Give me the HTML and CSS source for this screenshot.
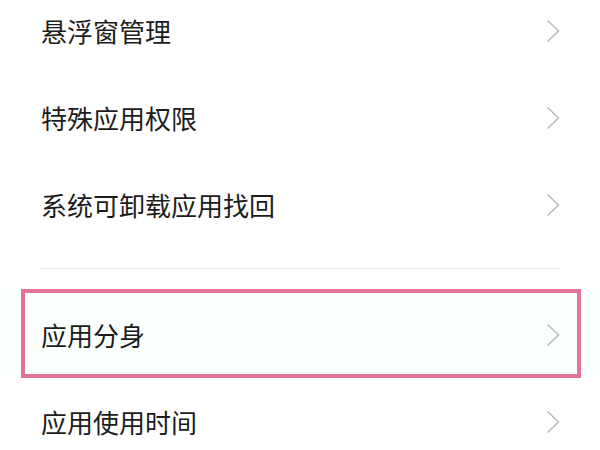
FILE: index.html
```html
<!DOCTYPE html>
<html lang="zh-CN">
<head>
    <meta charset="UTF-8">
    <meta name="viewport" content="width=device-width, initial-scale=1.0">
    <title>应用管理</title>
    <link rel="stylesheet" href="styles.css">
</head>

<body>
    <div class="settings">
        <ul class="group">
            <li class="item">
                <span class="label">悬浮窗管理</span>
                <svg class="arrow" viewBox="0 0 14 24"><path d="M1.5 1.5 L12.5 12 L1.5 22.5"/></svg>
            </li>
            <li class="item">
                <span class="label">特殊应用权限</span>
                <svg class="arrow" viewBox="0 0 14 24"><path d="M1.5 1.5 L12.5 12 L1.5 22.5"/></svg>
            </li>
            <li class="item">
                <span class="label">系统可卸载应用找回</span>
                <svg class="arrow" viewBox="0 0 14 24"><path d="M1.5 1.5 L12.5 12 L1.5 22.5"/></svg>
            </li>
        </ul>

        <div class="divider"></div>

        <ul class="group">
            <li class="item highlight">
                <span class="label">应用分身</span>
                <svg class="arrow" viewBox="0 0 14 24"><path d="M1.5 1.5 L12.5 12 L1.5 22.5"/></svg>
            </li>
            <li class="item">
                <span class="label">应用使用时间</span>
                <svg class="arrow" viewBox="0 0 14 24"><path d="M1.5 1.5 L12.5 12 L1.5 22.5"/></svg>
            </li>
        </ul>
    </div>
</body>
</html>
```

FILE: styles.css
```css
body {
    font-family: "Noto Sans CJK SC", "Noto Sans", sans-serif;
    background-color: #fff;
    margin: 0;
    padding: 0;
    overflow: hidden;
}

.settings {
    margin-top: -13px;
}

.group {
    list-style: none;
    margin: 0;
    padding: 0;
}

.item {
    display: flex;
    align-items: center;
    justify-content: space-between;
    height: 87px;
    padding: 0 40px 0 41px;
    position: relative;
}

.label {
    font-size: 26px;
    color: #1c1c1c;
}

.arrow {
    width: 14px;
    height: 24px;
    fill: none;
    stroke: #bcbcbc;
    stroke-width: 1.6;
}

.divider {
    height: 1px;
    background-color: #ececec;
    margin: 20px 40px 22px 40px;
}

.highlight {
    background-color: #fbfffe;
}

.highlight::after {
    content: "";
    position: absolute;
    left: 21px;
    right: 19px;
    top: -2px;
    bottom: 0;
    border: 4px solid #e2749c;
}
```
